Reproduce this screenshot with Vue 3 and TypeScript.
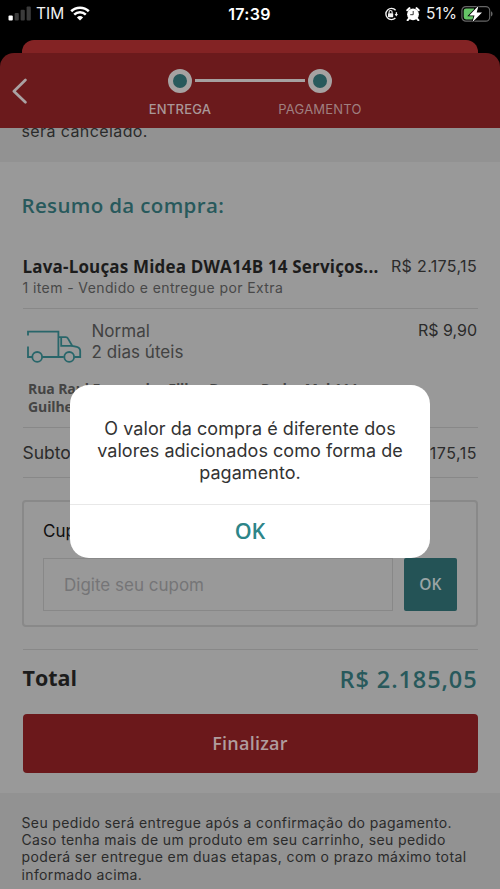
<script setup lang="ts">
import { ref } from 'vue'

const steps: string[] = ['ENTREGA', 'PAGAMENTO']
const product = {
  name: 'Lava-Louças Midea DWA14B 14 Serviços...',
  seller: '1 item - Vendido e entregue por Extra',
  price: 'R$ 2.175,15',
}
const shipping = { kind: 'Normal', eta: '2 dias úteis', price: 'R$ 9,90' }
const address: string[] = ['Rua Raul Fernandes Filho, Bueno, Padre Mel 114', 'Guilhermina']
const alertLines: string[] = [
  'O valor da compra é diferente dos',
  'valores adicionados como forma de',
  'pagamento.',
]
const notes: string[] = [
  'Seu pedido será entregue após a confirmação do pagamento.',
  'Caso tenha mais de um produto em seu carrinho, seu pedido',
  'poderá ser entregue em duas etapas, com o prazo máximo total',
  'informado acima.',
]
const coupon = ref('')
</script>

<template>
  <div class="screen">
    <div class="status">
      <div class="status-left">
        <svg class="signal" width="24" height="15" viewBox="0 0 24 15">
          <rect x="0.5" y="9.5" width="4.3" height="5" rx="1" fill="#fff" />
          <rect x="6.6" y="7" width="4.2" height="7.5" rx="1" fill="#3b3b3b" />
          <rect x="12.6" y="3.8" width="4.2" height="10.7" rx="1" fill="#3b3b3b" />
          <rect x="18.6" y="0.6" width="4.2" height="13.9" rx="1" fill="#3b3b3b" />
        </svg>
        <span class="carrier">TIM</span>
        <svg class="wifi" width="20" height="15" viewBox="0 0 20 15" fill="none" stroke="#fff">
          <path d="M1.2 5.3a12.6 12.6 0 0 1 17.6 0" stroke-width="2.6" />
          <path d="M4.2 8.7a8.3 8.3 0 0 1 11.6 0" stroke-width="2.5" />
          <path d="M10 14.6 6.9 11.4a4.5 4.5 0 0 1 6.2 0Z" fill="#fff" stroke="none" />
        </svg>
      </div>
      <div class="clock">17:39</div>
      <div class="status-right">
        <svg width="14" height="14" viewBox="0 0 14 14" fill="none" stroke="#f2f2f2">
          <path d="M11.6 3.2A5.6 5.6 0 1 0 11.4 11" stroke-width="1.4" />
          <path d="M12.4 5.2v2.4" stroke-width="1.3" />
          <path d="M10.6 7h3.4l-1.7 2.5Z" fill="#f2f2f2" stroke="none" />
          <rect x="4" y="6.2" width="5.2" height="4" rx="0.6" fill="#f2f2f2" stroke="none" />
          <path d="M5.1 6.4V5a1.5 1.5 0 0 1 3 0v1.4" stroke-width="1.1" />
        </svg>
        <svg class="alarm" width="14" height="14" viewBox="0 0 14 14">
          <circle cx="7" cy="7.3" r="5.9" fill="#fff" />
          <path d="M3.4 1.2 1.3 3.2M10.6 1.2l2.1 2M3 11.6l-1.3 1.5M11 11.6l1.3 1.5" stroke="#fff" stroke-width="2.1" stroke-linecap="round" />
          <path d="M7.2 4v3.7H4.2" fill="none" stroke="#222" stroke-width="0.9" />
        </svg>
        <span class="percent">51%</span>
        <svg class="battery" width="32" height="18" viewBox="0 0 32 18">
          <rect x="0.9" y="1.6" width="27.8" height="14.6" rx="4" fill="none" stroke="#666" stroke-width="1.2" />
          <path d="M5 3.4h8v11H5a2.3 2.3 0 0 1-2.3-2.3V5.7A2.3 2.3 0 0 1 5 3.4Z" fill="#65c466" />
          <path d="M30 6.3c2 .7 2 4.5 0 5.2Z" fill="#666" />
          <path d="M17.5 .8 8.2 10.5h5.3L11.4 17.3l9.6-9.9h-5.3Z" fill="#fff" stroke="#000" stroke-width="1.6" paint-order="stroke" />
        </svg>
      </div>
    </div>

    <div class="sheet-behind"></div>

    <header class="header">
      <svg class="back" width="16" height="26" viewBox="0 0 16 26" fill="none" stroke="#aaa2a3" stroke-width="2.7" stroke-linecap="round" stroke-linejoin="round">
        <path d="M13.4 2 1.9 13.2 13.4 24.3" />
      </svg>
      <div class="stepper">
        <div class="track">
          <i class="dot"></i><i class="rail"></i><i class="dot"></i>
        </div>
        <div class="labels">
          <span v-for="(s, i) in steps" :key="s" :class="{ current: i === 0 }">{{ s }}</span>
        </div>
      </div>
    </header>

    <div class="notice"><p>será cancelado.</p></div>

    <main class="summary">
      <h2>Resumo da compra:</h2>

      <section class="product">
        <div class="line">
          <strong>{{ product.name }}</strong>
          <span class="price">{{ product.price }}</span>
        </div>
        <p>{{ product.seller }}</p>
      </section>

      <section class="shipping">
        <div class="method">
          <svg class="truck" width="55" height="34" viewBox="0 0 55 34" fill="none" stroke="#28666a" stroke-width="1.8">
            <path d="M1 5.5V1.7H31.4V27H15.2M1 16.5V27H5M1 23.5V27" />
            <path d="M31.4 7.2h7.4c1 0 1.7.4 2.1 1.2l4.4 7.5 4.5.9c2.400.5 3.4 2 3.4 4.3V27H47.3M36.8 27h-5.4" />
            <path d="M34.2 7.5v8.4h11" />
            <circle cx="10.2" cy="26.9" r="4.9" />
            <circle cx="42.2" cy="26.9" r="4.9" />
          </svg>
          <div class="eta">
            <div>{{ shipping.kind }}</div>
            <div>{{ shipping.eta }}</div>
          </div>
          <span class="price flat">{{ shipping.price }}</span>
        </div>
        <div class="address">
          <div v-for="a in address" :key="a">{{ a }}</div>
        </div>
      </section>

      <section class="subtotal">
        <span>Subtotal</span>
        <span class="price">R$ 2.175,15</span>
      </section>

      <section class="coupon">
        <label for="coupon">Cupom</label>
        <div class="entry">
          <input id="coupon" v-model="coupon" type="text" placeholder="Digite seu cupom" />
          <button type="button">OK</button>
        </div>
      </section>

      <section class="total">
        <strong>Total</strong>
        <span>R$ 2.185,05</span>
      </section>

      <button class="finish" type="button">Finalizar</button>
    </main>

    <footer class="notes">
      <div v-for="n in notes" :key="n">{{ n }}</div>
    </footer>

    <div class="alert" role="alertdialog">
      <div class="message">
        <div v-for="l in alertLines" :key="l">{{ l }}</div>
      </div>
      <button type="button">OK</button>
    </div>
  </div>
</template>

<style>
body {
  margin: 0;
  background: #000;
}
</style>

<style scoped>
* {
  box-sizing: border-box;
}
p,
h2 {
  margin: 0;
}
button {
  border: 0;
  padding: 0;
  font-family: 'Open Sans', sans-serif;
}
.screen {
  position: relative;
  width: 500px;
  height: 889px;
  overflow: hidden;
  display: flex;
  flex-direction: column;
  background: #000;
  font-family: Inter, 'Liberation Sans', sans-serif;
  color: #2b2b2b;
  white-space: nowrap;
}
.screen > * {
  flex: none;
}

.status {
  height: 40px;
  padding: 3px 7px 0 8px;
  display: grid;
  grid-template-columns: 1fr auto 1fr;
  align-items: start;
  color: #f2f2f2;
  line-height: 20px;
}
.status-left,
.status-right {
  display: flex;
  align-items: center;
  height: 20px;
  padding-top: 1px;
}
.status-right {
  justify-content: flex-end;
}
.carrier {
  margin-left: 4px;
  font-size: 15.5px;
  width: 27px;
}
.wifi {
  margin-left: 7px;
}
.clock {
  padding-top: 1px;
  margin-right: 2px;
  font-size: 16px;
  font-weight: 600;
  letter-spacing: 0.3px;
  color: #fff;
}
.alarm {
  margin-left: 8px;
}
.percent {
  margin-left: 6px;
  font-size: 15.5px;
}
.battery {
  margin-left: 4px;
}

.sheet-behind {
  height: 13px;
  margin: 0 22px;
  border-radius: 12px 12px 0 0;
  background: #832324;
}
.header {
  height: 75px;
  padding: 15.5px 12px 0;
  display: grid;
  grid-template-columns: 16px 1fr 16px;
  border-radius: 14px 14px 0 0;
  background: #6b1a1c;
}
.back {
  margin-top: 9px;
}
.stepper {
  display: flex;
  flex-direction: column;
  align-items: center;
}
.track {
  width: 164px;
  display: flex;
  align-items: center;
  gap: 3px;
}
.dot {
  width: 24px;
  height: 24px;
  border: 5px solid #a6a2a2;
  border-radius: 50%;
  background: #28595c;
}
.rail {
  flex: 1;
  height: 3px;
  background: #a6a0a0;
}
.labels {
  width: 280px;
  margin-top: 6px;
  display: grid;
  grid-template-columns: 1fr 1fr;
  text-align: center;
  font-size: 13px;
  line-height: 20px;
  letter-spacing: 0.22px;
  color: #9f7f80;
}
.labels .current {
  font-weight: 500;
  color: #a99798;
}

.notice {
  height: 34px;
  padding: 0 21.5px;
  overflow: hidden;
  background: #929292;
}
.notice p {
  margin-top: -7px;
  font-size: 16px;
  line-height: 20px;
  letter-spacing: 0.4px;
}

.summary {
  height: 631px;
  padding: 29px 22.5px 0;
  background: #999;
}
h2 {
  margin-left: -1px;
  font: 600 20.5px/28px 'Open Sans', sans-serif;
  letter-spacing: 0.35px;
  color: #28595c;
}
.line {
  display: flex;
  justify-content: space-between;
  height: 24px;
  line-height: 24px;
}
.price {
  margin-right: 0.5px;
  font-size: 16px;
  letter-spacing: 0.35px;
}
.product {
  height: 55px;
  margin-top: 35px;
  border-bottom: 1px solid #888;
}
.product strong {
  padding-top: 0.5px;
  font: 700 17px/24px 'Open Sans', sans-serif;
  letter-spacing: 0.17px;
  color: #1c1c1c;
}
.product p {
  font-size: 14px;
  line-height: 20px;
  letter-spacing: 0.4px;
  color: #484848;
}
.shipping {
  height: 119px;
  padding-top: 12px;
  border-bottom: 1px solid #888;
}
.method {
  display: flex;
  align-items: flex-start;
  height: 41px;
}
.truck {
  margin: 9px 0 0 4.5px;
}
.eta {
  margin-left: 9.5px;
  font-size: 17px;
  line-height: 20.6px;
  letter-spacing: 0.05px;
  color: #424242;
}
.flat {
  margin-left: auto;
  line-height: 19px;
  letter-spacing: 0;
}
.address {
  margin: 18px 0 0 5.5px;
  font: 700 14px/18px 'Open Sans', sans-serif;
  letter-spacing: -0.1px;
  color: #444;
}
.subtotal {
  height: 49.5px;
  padding-top: 1px;
  display: flex;
  align-items: center;
  justify-content: space-between;
  border-bottom: 1px solid #888;
  font-size: 17.5px;
}
.subtotal .price {
  letter-spacing: 0.5px;
}
.coupon {
  height: 127px;
  margin: 22px -0.5px 0;
  padding: 17px 19px 0;
  border: 2px solid #898989;
  border-radius: 4px;
}
.coupon label {
  display: block;
  font-size: 17px;
  line-height: 24px;
  color: #101010;
}
.entry {
  display: flex;
  gap: 11px;
  margin-top: 15px;
}
.entry input {
  width: 350px;
  height: 53px;
  padding: 1px 20px 0;
  border: 1px solid #888;
  border-radius: 0;
  background: transparent;
  font: 400 17px Inter, 'Liberation Sans', sans-serif;
}
.entry input::placeholder {
  color: #757577;
  opacity: 1;
}
.entry button {
  width: 53.5px;
  height: 53px;
  border-radius: 2px;
  background: #245356;
  color: #9aa4a5;
  font-size: 15.5px;
  font-weight: 600;
}
.total {
  height: 65px;
  margin-top: 22px;
  padding-top: 14px;
  display: flex;
  justify-content: space-between;
  border-top: 1px solid #888;
  font-family: 'Open Sans', sans-serif;
  line-height: 28px;
}
.total strong {
  font-size: 21.5px;
  color: #1c1c1c;
}
.total span {
  padding-top: 1px;
  font-size: 23.5px;
  font-weight: 600;
  letter-spacing: 0.9px;
  color: #28595c;
}
.finish {
  display: block;
  width: 100%;
  height: 59px;
  border-radius: 4px;
  background: #6b181b;
  color: #b09c9d;
  font-size: 18px;
  font-weight: 600;
  letter-spacing: 0.25px;
}

.notes {
  flex: 1 0 0;
  padding: 20.5px 21.5px 0;
  background: #929292;
  font-size: 14px;
  line-height: 17.35px;
  letter-spacing: 0.37px;
}

.alert {
  position: absolute;
  left: 70px;
  top: 384.5px;
  width: 360px;
  height: 173px;
  border-radius: 19px;
  background: #fff;
  text-align: center;
}
.message {
  height: 120px;
  padding-top: 33px;
  border-bottom: 1px solid #e8e8e8;
  font-size: 18px;
  line-height: 22px;
  letter-spacing: 0.05px;
  color: #333;
}
.alert button {
  width: 100%;
  height: 52px;
  border-radius: 0 0 19px 19px;
  background: transparent;
  color: #2d8588;
  font-size: 21.5px;
  font-weight: 600;
}
</style>
